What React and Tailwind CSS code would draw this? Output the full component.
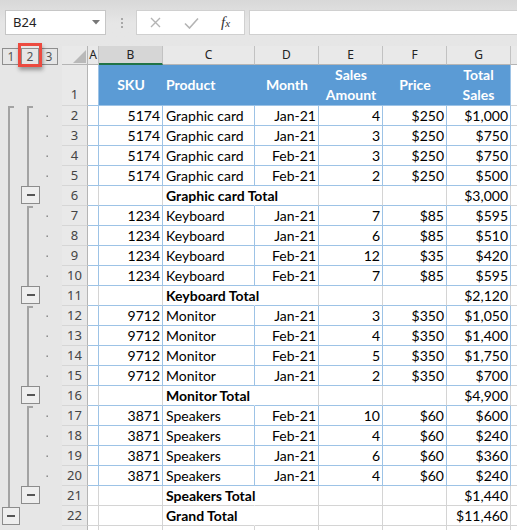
import React from 'react'

const BLUE = 'border-[#9dc3e6]'
const GRID = 'border-[#d4d4d4]'

const widths = ['w-[11px]', 'w-[64px]', 'w-[92px]', 'w-[64px]', 'w-[64px]', 'w-[64px]', 'w-[64px]']
const letters = ['A', 'B', 'C', 'D', 'E', 'F', 'G']

const rows = [
  { n: 2, d: ['5174', 'Graphic card', 'Jan-21', '4', '$250', '$1,000'] },
  { n: 3, d: ['5174', 'Graphic card', 'Jan-21', '3', '$250', '$750'] },
  { n: 4, d: ['5174', 'Graphic card', 'Feb-21', '3', '$250', '$750'] },
  { n: 5, d: ['5174', 'Graphic card', 'Feb-21', '2', '$250', '$500'] },
  { n: 6, sub: 'Graphic card Total', total: '$3,000' },
  { n: 7, d: ['1234', 'Keyboard', 'Jan-21', '7', '$85', '$595'] },
  { n: 8, d: ['1234', 'Keyboard', 'Jan-21', '6', '$85', '$510'] },
  { n: 9, d: ['1234', 'Keyboard', 'Feb-21', '12', '$35', '$420'] },
  { n: 10, d: ['1234', 'Keyboard', 'Feb-21', '7', '$85', '$595'] },
  { n: 11, sub: 'Keyboard Total', total: '$2,120' },
  { n: 12, d: ['9712', 'Monitor', 'Jan-21', '3', '$350', '$1,050'] },
  { n: 13, d: ['9712', 'Monitor', 'Feb-21', '4', '$350', '$1,400'] },
  { n: 14, d: ['9712', 'Monitor', 'Feb-21', '5', '$350', '$1,750'] },
  { n: 15, d: ['9712', 'Monitor', 'Jan-21', '2', '$350', '$700'] },
  { n: 16, sub: 'Monitor Total', total: '$4,900' },
  { n: 17, d: ['3871', 'Speakers', 'Feb-21', '10', '$60', '$600'] },
  { n: 18, d: ['3871', 'Speakers', 'Feb-21', '4', '$60', '$240'] },
  { n: 19, d: ['3871', 'Speakers', 'Jan-21', '6', '$60', '$360'] },
  { n: 20, d: ['3871', 'Speakers', 'Jan-21', '4', '$60', '$240'] },
  { n: 21, sub: 'Speakers Total', total: '$1,440' },
  { n: 22, sub: 'Grand Total', total: '$11,460' },
]

function Toolbar() {
  return (
    <div className="h-[46px] bg-gradient-to-b from-[#d8d8d8] via-[#e6e6e6] to-[#e6e6e6] flex items-start pt-[10px]">
      <div className="ml-[5px] w-[101px] h-[25px] bg-white border border-[#c6c6c6] flex items-center pl-[7px] pr-[5px] text-[13px] text-[#222]">
        <span className="flex-1">B24</span>
        <svg width="8" height="5" viewBox="0 0 8 5">
          <polygon points="0,0 8,0 4,4.5" fill="#777" />
        </svg>
      </div>
      <div className="ml-[15px] mt-[8px] flex flex-col gap-[2px]">
        <div className="w-[2px] h-[2px] bg-[#a8a8a8]" />
        <div className="w-[2px] h-[2px] bg-[#a8a8a8]" />
        <div className="w-[2px] h-[2px] bg-[#a8a8a8]" />
      </div>
      <div className="ml-[13px] w-[109px] h-[25px] bg-white border border-[#d0d0d0] flex items-center">
        <svg className="ml-[13px]" width="11" height="11" viewBox="0 0 11 11">
          <path d="M1 1 L10 10 M10 1 L1 10" stroke="#b4b4b4" strokeWidth="1.4" fill="none" />
        </svg>
        <svg className="ml-[23px]" width="15" height="12" viewBox="0 0 15 12">
          <path d="M1 6.5 L5.5 11 L14 1.5" stroke="#b4b4b4" strokeWidth="1.6" fill="none" />
        </svg>
        <span className="ml-[22px] font-['Liberation_Serif',serif] italic text-[15px] text-[#333] leading-none">
          f<span className="text-[11px]">x</span>
        </span>
      </div>
      <div className="ml-[4px] flex-1 h-[25px] bg-white border border-[#d0d0d0] border-r-0" />
    </div>
  )
}

function Outline() {
  const starts = [2, 7, 12, 17]
  const dataRows = rows.filter((r) => r.d).map((r) => r.n)
  return (
    <div className="w-[62px] flex flex-col">
      <div className="h-[19px] relative">
        <div className="flex gap-[1px] pl-[2px] pt-[2px] text-[12px] text-[#555]">
          {['1', '2', '3'].map((t) => (
            <div key={t} className="w-[18px] h-[17px] border border-[#8e8e8e] flex items-center justify-center leading-none">
              {t}
            </div>
          ))}
        </div>
        <div className="absolute left-[18px] top-[-3px] w-[24px] h-[24px] border-[3px] border-[#ec4a3f] shadow-[1px_3px_4px_rgba(0,0,0,0.35)]" />
      </div>
      <div className="h-[41px]" />
      <svg width="62" height="424" viewBox="0 0 62 424">
        <path d="M14 1 H9 V401" stroke="#a3a3a3" strokeWidth="2" fill="none" />
        <rect x="2.5" y="401.5" width="17" height="17" fill="#eeeeee" stroke="#8c8c8c" />
        <path d="M7 410 H15" stroke="#555" strokeWidth="2" />
        {starts.map((s) => {
          const top = (s - 2) * 20 + 1
          const box = (s + 2) * 20
          return (
            <g key={s}>
              <path d={`M33 ${top} H28 V${box}`} stroke="#a3a3a3" strokeWidth="2" fill="none" />
              <rect x="21.5" y={box + 0.5} width="18" height="17" fill="#eeeeee" stroke="#8c8c8c" />
              <path d={`M27 ${box + 9} H35`} stroke="#555" strokeWidth="2" />
            </g>
          )
        })}
        {dataRows.map((n) => (
          <rect key={n} x="46.5" y={(n - 2) * 20 + 9.5} width="1.4" height="1.4" fill="#7a7a7a" />
        ))}
      </svg>
    </div>
  )
}

function ColumnHeader() {
  return (
    <div className="flex h-[19px] bg-[#e9e9e9] text-[12px] text-[#222]">
      <div className="w-[26px] h-[19px] border-r border-b border-[#b5b5b5] flex items-end justify-end pr-[1px] pb-[1px]">
        <svg width="13" height="13" viewBox="0 0 13 13">
          <polygon points="0,13 13,13 13,0" fill="#b9b9b9" />
        </svg>
      </div>
      {letters.map((l, i) => (
        <div
          key={l}
          className={`${widths[i]} h-[19px] border-r border-[#c2c2c2] flex items-center justify-center ${
            l === 'B' ? 'bg-[#d6d6d6] border-b-2 border-b-[#217346]' : 'border-b border-b-[#b5b5b5]'
          }`}
        >
          {l}
        </div>
      ))}
      <div className="flex-1 h-[19px] border-b border-b-[#b5b5b5]" />
    </div>
  )
}

function RowNum({ n, tall }) {
  return (
    <div
      className={`w-[26px] ${tall ? 'h-[41px] items-end pb-[1px]' : 'h-[20px] items-center'} bg-[#e9e9e9] border-r border-r-[#b5b5b5] border-b border-b-[#d6d6d6] flex justify-center font-['Noto_Sans',sans-serif] text-[13px] text-[#444]`}
    >
      {n}
    </div>
  )
}

function HeaderRow() {
  const cell = 'h-[41px] bg-[#5b9bd5] border-b border-[#9dc3e6] flex items-center text-white font-bold leading-[20px]'
  return (
    <div className="flex">
      <RowNum n="1" tall />
      <div className={`w-[11px] h-[41px] border-r border-b ${BLUE}`} />
      <div className={`w-[64px] ${cell} justify-center`}>SKU</div>
      <div className={`w-[92px] ${cell} pl-[3px]`}>Product</div>
      <div className={`w-[64px] ${cell} justify-center`}>Month</div>
      <div className={`w-[64px] ${cell} justify-center text-center`}>
        Sales
        <br />
        Amount
      </div>
      <div className={`w-[64px] ${cell} justify-center`}>Price</div>
      <div className={`w-[64px] ${cell} justify-center text-center border-r border-r-[#9dc3e6]`}>
        Total
        <br />
        Sales
      </div>
      <div className={`flex-1 h-[41px] border-b ${GRID}`} />
    </div>
  )
}

function DataRow({ r }) {
  const c = `h-[20px] border-r border-b ${BLUE} flex items-center whitespace-nowrap`
  return (
    <div className="flex">
      <RowNum n={r.n} />
      <div className={`w-[11px] h-[20px] border-r border-b ${BLUE}`} />
      <div className={`w-[64px] ${c} justify-end pr-[2px]`}>{r.d[0]}</div>
      <div className={`w-[92px] ${c} pl-[3px]`}>{r.d[1]}</div>
      <div className={`w-[64px] ${c} justify-end pr-[2px]`}>{r.d[2]}</div>
      <div className={`w-[64px] ${c} justify-end pr-[2px]`}>{r.d[3]}</div>
      <div className={`w-[64px] ${c} justify-end pr-[2px]`}>{r.d[4]}</div>
      <div className={`w-[64px] ${c} justify-end pr-[2px]`}>{r.d[5]}</div>
      <div className={`flex-1 h-[20px] border-b ${GRID}`} />
    </div>
  )
}

function SubRow({ r, nextIsData }) {
  const bottom = nextIsData ? 'border-b-[#9dc3e6]' : 'border-b-[#d4d4d4]'
  const c = `h-[20px] border-r border-r-[#d4d4d4] border-b ${bottom} flex items-center whitespace-nowrap`
  return (
    <div className="flex">
      <RowNum n={r.n} />
      <div className={`w-[11px] h-[20px] border-r border-r-[#d4d4d4] border-b ${bottom}`} />
      <div className={`w-[64px] ${c}`} />
      <div className={`w-[92px] h-[20px] border-r border-r-transparent border-b ${bottom} flex items-center whitespace-nowrap overflow-visible pl-[3px] font-bold`}>
        {r.sub}
      </div>
      <div className={`w-[64px] ${c}`} />
      <div className={`w-[64px] ${c}`} />
      <div className={`w-[64px] ${c}`} />
      <div className={`w-[64px] ${c} justify-end pr-[2px]`}>{r.total}</div>
      <div className={`flex-1 h-[20px] border-b ${GRID}`} />
    </div>
  )
}

export default function App() {
  return (
    <div className="w-[517px] h-[530px] overflow-hidden bg-[#e6e6e6] font-['Noto_Sans',sans-serif]">
      <Toolbar />
      <div className="flex">
        <Outline />
        <div className="flex-1 flex flex-col">
          <ColumnHeader />
          <div className="bg-white font-['Lato',sans-serif] text-[14px] text-black">
            <HeaderRow />
            {rows.map((r, i) =>
              r.d ? (
                <DataRow key={r.n} r={r} />
              ) : (
                <SubRow key={r.n} r={r} nextIsData={!!(rows[i + 1] && rows[i + 1].d)} />
              )
            )}
            <div className="flex h-[20px]">
              <div className="w-[26px] bg-[#e9e9e9] border-r border-r-[#b5b5b5]" />
              <div className="w-[11px] border-r border-[#d4d4d4]" />
              <div className="w-[64px] border-r border-[#d4d4d4]" />
              <div className="w-[92px] border-r border-[#d4d4d4]" />
              <div className="w-[64px] border-r border-[#d4d4d4]" />
              <div className="w-[64px] border-r border-[#d4d4d4]" />
              <div className="w-[64px] border-r border-[#d4d4d4]" />
              <div className="w-[64px] border-r border-[#d4d4d4]" />
            </div>
          </div>
        </div>
      </div>
    </div>
  )
}
